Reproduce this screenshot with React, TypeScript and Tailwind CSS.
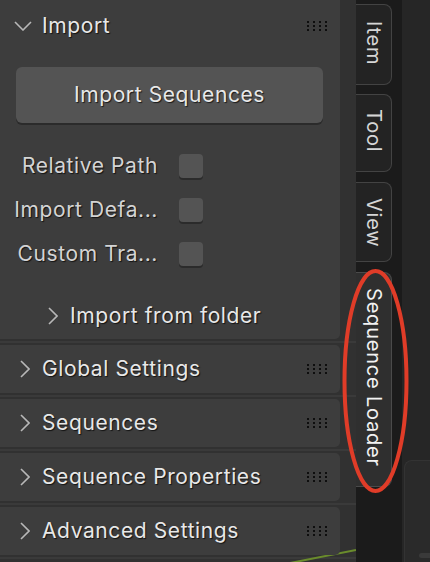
import React from "react";

const font = { fontFamily: "Inter, 'Noto Sans', sans-serif" };

const Grip = () => (
  <svg width="20" height="10" viewBox="0 0 20 10" className="shrink-0 ml-auto">
    {[0, 1, 2, 3].map((c) =>
      [0, 1, 2].map((r) => (
        <rect key={`${c}-${r}`} x={c * 6} y={r * 4} width="2" height="2" fill="#0e0e0e" />
      ))
    )}
  </svg>
);

const ChevronDown = () => (
  <svg width="18" height="10" viewBox="0 0 18 10" className="shrink-0">
    <path d="M1 1 L9 9 L17 1" fill="none" stroke="#b8b8b8" strokeWidth="1.6" />
  </svg>
);

const ChevronRight = () => (
  <svg width="10" height="18" viewBox="0 0 10 18" className="shrink-0">
    <path d="M1 1 L9 9 L1 17" fill="none" stroke="#b8b8b8" strokeWidth="1.6" />
  </svg>
);

const txt =
  "text-[21px] tracking-[0.6px] text-[#e8e8e8] [text-shadow:1px_1px_1px_rgba(0,0,0,0.7)] whitespace-nowrap";

const Header = ({ title }: { title: string }) => (
  <div className="relative z-10 h-[48px] w-[340px] bg-[#3d3d3d] rounded-r-[5px] flex items-center pl-[20px] pr-[13px]">
    <ChevronRight />
    <span className={`ml-[12px] ${txt}`}>{title}</span>
    <Grip />
  </div>
);

const CheckRow = ({ label }: { label: string }) => (
  <div className="h-[44px] flex items-center">
    <div className="w-[158px] text-right text-[21px] tracking-[0.6px] text-[#d4d4d4] [text-shadow:1px_1px_1px_rgba(0,0,0,0.7)] whitespace-nowrap">
      {label}
    </div>
    <div className="ml-[21px] w-[24px] h-[24px] rounded-[4px] bg-[#545454] shadow-[0_2px_0_#2b2b2b]" />
  </div>
);

const Tab = ({
  label,
  h,
  mt,
  pt,
  active,
}: {
  label: string;
  h: number;
  mt: number;
  pt: number;
  active?: boolean;
}) => (
  <div
    className={`w-[36px] rounded-r-[8px] border border-l-0 flex justify-center ${
      active ? "bg-[#2f2f2f] border-[#4a4a4a] text-[#f2f2f2]" : "bg-[#232323] border-[#434343] text-[#d6d6d6]"
    }`}
    style={{ height: h, marginTop: mt, paddingTop: pt }}
  >
    <span className="[writing-mode:vertical-rl] text-[20px] tracking-[0.8px] leading-none whitespace-nowrap">
      {label}
    </span>
  </div>
);

export default function App() {
  return (
    <div className="relative w-[430px] h-[562px] flex overflow-hidden bg-[#303030]" style={font}>
      <div className="relative w-[356px] h-full bg-[#313131] flex flex-col gap-[6px]">
        <svg className="absolute left-0 top-0 z-0" width="356" height="562" viewBox="0 0 356 562">
          <line x1="0" y1="342" x2="356" y2="342" stroke="#3a3a3a" strokeWidth="2" />
          <line x1="0" y1="396" x2="356" y2="396" stroke="#3a3a3a" strokeWidth="2" />
          <line x1="0" y1="450" x2="356" y2="450" stroke="#3a3a3a" strokeWidth="2" />
          <line x1="0" y1="504" x2="356" y2="504" stroke="#3a3a3a" strokeWidth="2" />
          <line x1="0" y1="558" x2="356" y2="558" stroke="#3a3a3a" strokeWidth="2" />
          <line x1="285" y1="564" x2="356" y2="550" stroke="#6a8c2c" strokeWidth="2" />
        </svg>

        <div className="relative z-10 w-[340px] h-[339px] bg-[#3d3d3d] rounded-br-[5px] flex flex-col">
          <div className="h-[51px] pt-[1px] flex items-center pl-[14px] pr-[13px]">
            <ChevronDown />
            <span className={`ml-[10px] ${txt}`}>Import</span>
            <Grip />
          </div>
          <div className="mt-[16px] ml-[16px] w-[307px] h-[56px] rounded-[6px] bg-[#545454] shadow-[0_2px_0_#2b2b2b] flex items-center justify-center">
            <span className={txt}>Import Sequences</span>
          </div>
          <div className="mt-[21px] flex flex-col">
            <CheckRow label="Relative Path" />
            <CheckRow label="Import Defa..." />
            <CheckRow label="Custom Tra..." />
          </div>
          <div className="mt-[20px] h-[40px] flex items-center pl-[48px]">
            <ChevronRight />
            <span className={`ml-[12px] ${txt}`}>Import from folder</span>
          </div>
        </div>

        <Header title="Global Settings" />
        <Header title="Sequences" />
        <Header title="Sequence Properties" />
        <Header title="Advanced Settings" />
      </div>

      <div className="w-[46px] h-full bg-[#1b1b1b] flex flex-col">
        <Tab label="Item" h={81} mt={4} pt={16} />
        <Tab label="Tool" h={78} mt={9} pt={14} />
        <Tab label="View" h={80} mt={10} pt={15} />
        <Tab label="Sequence Loader" h={215} mt={10} pt={15} active />
      </div>

      <div className="w-[28px] h-full bg-[#262626] flex flex-col">
        <div className="mt-[460px] ml-[2px] flex-1 rounded-tl-[8px] bg-[#2a2a2a] border-l border-t border-[#333333] relative">
          <div className="absolute left-[14px] bottom-[4px] w-[20px] h-[5px] rounded-full bg-[#3a3a3a]" />
        </div>
      </div>

      <svg className="absolute left-0 top-0 pointer-events-none" width="430" height="562" viewBox="0 0 430 562">
        <ellipse cx="375.5" cy="381" rx="31" ry="110" fill="none" stroke="#e03c28" strokeWidth="4" />
      </svg>
    </div>
  );
}
